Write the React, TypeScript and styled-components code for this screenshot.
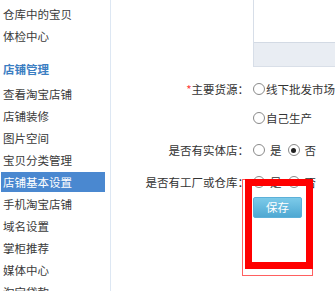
import styled, { createGlobalStyle } from "styled-components";

const Global = createGlobalStyle`
    html, body {
        margin: 0;
        padding: 0;
        background: #fff;
        overflow: hidden;
    }
    body {
        font-family: "Noto Sans CJK SC", "Liberation Sans", sans-serif;
        font-size: 11.5px;
        color: #333;
    }
`;

const Page = styled.div`
    position: relative;
    display: flex;
    width: 335px;
    height: 291px;
    overflow: hidden;
`;

const Sidebar = styled.div`
    flex: 0 0 110px;
    border-right: 1px solid #dde7f3;
    padding-top: 3px;
    display: flex;
    flex-direction: column;
`;

const Item = styled.div<{ $active?: boolean }>`
    height: 20px;
    line-height: 20px;
    margin: 1px 5px 1px 1px;
    padding-left: 2px;
    white-space: nowrap;
    color: ${p => (p.$active ? "#fff" : "#3a3a3a")};
    background: ${p => (p.$active ? "#4a88d0" : "transparent")};
`;

const Heading = styled.div`
    height: 22px;
    line-height: 22px;
    margin: 11px 0 3px;
    padding-left: 3px;
    font-weight: bold;
    color: #3b7ec2;
`;

const Main = styled.div`
    flex: 1;
    display: flex;
    flex-direction: column;
    min-width: 0;
`;

const Editor = styled.div`
    margin-left: 142px;
    width: 300px;
    height: 67px;
    border-left: 1px solid #d7dee8;
    display: flex;
    flex-direction: column;
`;

const EditorBody = styled.div`
    height: 42px;
`;

const EditorBar = styled.div`
    flex: 1;
    background: #e9edf3;
    border-top: 1px solid #d3dae4;
    border-bottom: 1px solid #d9dfe8;
`;

const Form = styled.div`
    display: flex;
    flex-direction: column;
    gap: 10px;
    margin-top: 11px;
`;

const Field = styled.div`
    display: flex;
    align-items: flex-start;
`;

const Label = styled.div`
    width: 142px;
    padding-right: 4px;
    box-sizing: border-box;
    height: 22px;
    line-height: 22px;
    text-align: right;
    white-space: nowrap;
    color: #333;
`;

const Star = styled.span`
    color: #ff3b3b;
`;

const Options = styled.div<{ $inline?: boolean }>`
    display: flex;
    flex-direction: ${p => (p.$inline ? "row" : "column")};
    gap: ${p => (p.$inline ? "6px" : "7px")};
`;

const Option = styled.label<{ $spaced?: boolean }>`
    display: flex;
    align-items: center;
    gap: ${p => (p.$spaced ? "5px" : "1px")};
    height: 22px;
    white-space: nowrap;
    color: #333;
`;

const Radio = styled.span<{ $checked?: boolean }>`
    position: relative;
    width: 10px;
    height: 10px;
    border: 1px solid #8a8a8a;
    border-radius: 50%;
    background: #fff;
    &::after {
        content: "";
        display: ${p => (p.$checked ? "block" : "none")};
        position: absolute;
        left: 2.5px;
        top: 2.5px;
        width: 5px;
        height: 5px;
        border-radius: 50%;
        background: #222;
    }
`;

const SaveButton = styled.button`
    margin: 4px 0 0 142px;
    width: 49px;
    height: 21px;
    padding: 0;
    border: 1px solid #5cb0d8;
    border-radius: 2px;
    background: linear-gradient(#7ccae9, #4ea8d2);
    color: #fff;
    font-family: inherit;
    font-size: 11.5px;
    line-height: 19px;
`;

const Mark = styled.div<{ $thin?: boolean }>`
    position: absolute;
    box-sizing: border-box;
    pointer-events: none;
    left: ${p => (p.$thin ? "242px" : "245px")};
    top: 179px;
    width: ${p => (p.$thin ? "71px" : "68px")};
    height: ${p => (p.$thin ? "97px" : "90px")};
    border: ${p => (p.$thin ? "1px solid #ff6060" : "7px solid #ff0000")};
`;

const menu = ["查看淘宝店铺", "店铺装修", "图片空间", "宝贝分类管理", "店铺基本设置", "手机淘宝店铺", "域名设置", "掌柜推荐", "媒体中心", "淘宝贷款"];

export default function App() {
    return (
        <Page>
            <Global />
            <Sidebar>
                <Item>仓库中的宝贝</Item>
                <Item>体检中心</Item>
                <Heading>店铺管理</Heading>
                {menu.map(m => (
                    <Item key={m} $active={m === "店铺基本设置"}>{m}</Item>
                ))}
            </Sidebar>
            <Main>
                <Editor>
                    <EditorBody />
                    <EditorBar />
                </Editor>
                <Form>
                    <Field>
                        <Label><Star>*</Star>主要货源：</Label>
                        <Options>
                            <Option><Radio />线下批发市场</Option>
                            <Option><Radio />自己生产</Option>
                        </Options>
                    </Field>
                    <Field>
                        <Label>是否有实体店：</Label>
                        <Options $inline>
                            <Option $spaced><Radio />是</Option>
                            <Option $spaced><Radio $checked />否</Option>
                        </Options>
                    </Field>
                    <Field>
                        <Label>是否有工厂或仓库：</Label>
                        <Options $inline>
                            <Option $spaced><Radio />是</Option>
                            <Option $spaced><Radio />否</Option>
                        </Options>
                    </Field>
                </Form>
                <SaveButton>保存</SaveButton>
            </Main>
            <Mark $thin />
            <Mark />
        </Page>
    );
}
